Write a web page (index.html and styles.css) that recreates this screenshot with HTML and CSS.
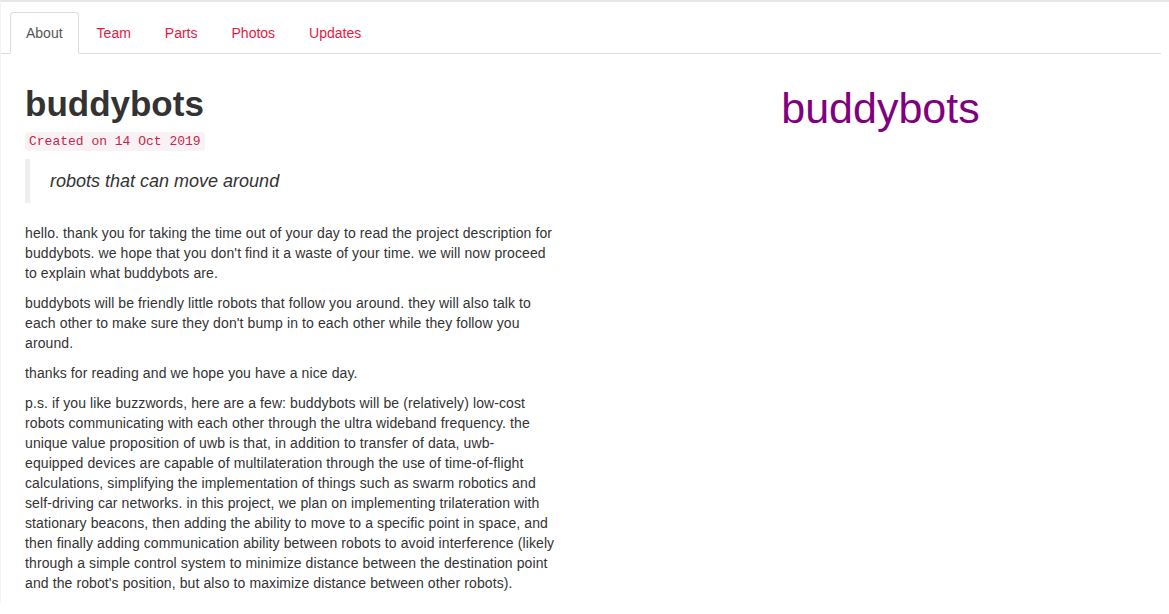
FILE: index.html
```html
<!DOCTYPE html>
<html lang="en">
<head>
<meta charset="utf-8">
<title>buddybots</title>
<link rel="stylesheet" href="styles.css">
</head>
<body>
<div class="frame">
  <ul class="tabs">
    <li class="tab active"><a href="#">About</a></li>
    <li class="tab"><a href="#">Team</a></li>
    <li class="tab"><a href="#">Parts</a></li>
    <li class="tab"><a href="#">Photos</a></li>
    <li class="tab"><a href="#">Updates</a></li>
  </ul>
  <div class="row">
    <div class="main">
      <h1 class="title">buddybots</h1>
      <code class="created">Created on 14 Oct 2019</code>
      <blockquote class="tagline">robots that can move around</blockquote>
      <p>hello. thank you for taking the time out of your day to read the project description for buddybots. we hope that you don't find it a waste of your time. we will now proceed to explain what buddybots are.</p>
      <p>buddybots will be friendly little robots that follow you around. they will also talk to each other to make sure they don't bump in to each other while they follow you around.</p>
      <p>thanks for reading and we hope you have a nice day.</p>
      <p>p.s. if you like buzzwords, here are a few: buddybots will be (relatively) low-cost robots communicating with each other through the ultra wideband frequency. the unique value proposition of uwb is that, in addition to transfer of data, uwb-<br>equipped devices are capable of multilateration through the use of time-of-flight calculations, simplifying the implementation of things such as swarm robotics and self-driving car networks. in this project, we plan on implementing trilateration with stationary beacons, then adding the ability to move to a specific point in space, and then finally adding communication ability between robots to avoid interference (likely through a simple control system to minimize distance between the destination point and the robot's position, but also to maximize distance between other robots).</p>
    </div>
    <div class="side">
      <div class="logo">buddybots</div>
    </div>
  </div>
</div>
</body>
</html>
```
FILE: styles.css
```css
html, body {
  margin: 0;
  padding: 0;
  background: #fff;
}
body {
  font-family: "Liberation Sans", Arial, sans-serif;
  font-size: 14px;
  line-height: 20px;
  color: #333;
}
.frame {
  border-top: 2px solid #e6e6e6;
  border-left: 1px solid #f3f3f3;
  padding-top: 10px;
  padding-right: 8px;
  min-height: 600px;
  box-sizing: border-box;
}
.tabs {
  list-style: none;
  margin: 0;
  padding: 0 0 0 9px;
  display: flex;
  border-bottom: 1px solid #ddd;
}
.tab {
  margin-right: 2px;
  margin-bottom: -1px;
}
.tab a {
  display: block;
  padding: 10px 15px;
  line-height: 20px;
  border: 1px solid transparent;
  border-radius: 4px 4px 0 0;
  color: #e8173f;
  text-decoration: none;
}
.tab.active a {
  color: #555;
  background: #fff;
  border-color: #ddd #ddd transparent #ddd;
}
.row {
  display: flex;
}
.main {
  width: 530px;
  padding-left: 24px;
  padding-right: 45px;
  flex: none;
}
.main p {
  letter-spacing: 0.1px;
}
.side {
  flex: 1;
  text-align: center;
}
.title {
  font-size: 35px;
  font-weight: bold;
  line-height: 39px;
  margin: 30px 0 7px;
  color: #333;
}
.created {
  display: inline-block;
  font-family: "Liberation Mono", "DejaVu Sans Mono", monospace;
  font-size: 13px;
  line-height: 15px;
  padding: 2px 4px;
  color: #c7254e;
  background: #f9f2f4;
  border-radius: 4px;
}
.tagline {
  margin: 8px 0 20px;
  padding: 10px 20px;
  border-left: 5px solid #eee;
  font-size: 18px;
  line-height: 24px;
  font-style: italic;
}
p {
  margin: 0 0 10px;
}
.logo {
  margin-top: 29px;
  font-size: 43px;
  line-height: 50px;
  color: #800080;
}
```
